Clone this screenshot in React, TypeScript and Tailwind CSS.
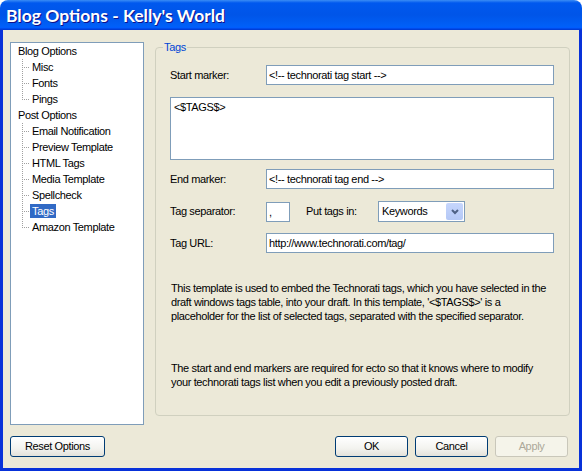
import React from 'react';

const tree = [
  { label: 'Blog Options', children: ['Misc', 'Fonts', 'Pings'] },
  {
    label: 'Post Options',
    children: [
      'Email Notification',
      'Preview Template',
      'HTML Tags',
      'Media Template',
      'Spellcheck',
      'Tags',
      'Amazon Template',
    ],
  },
];

const selected = 'Tags';

function Connector({ last }: { last: boolean }) {
  return (
    <svg width="8" height="16" className="shrink-0">
      <line x1="0.5" y1="0" x2="0.5" y2={last ? 9 : 16} stroke="#a0a0a0" strokeDasharray="1 1" />
      <line x1="2" y1="8.5" x2="8" y2="8.5" stroke="#a0a0a0" strokeDasharray="1 1" />
    </svg>
  );
}

function TreePanel() {
  return (
    <div className="w-[134px] h-[383px] mt-[1px] shrink-0 border border-[#7f9db9] bg-white">
      {tree.map((group) => (
        <div key={group.label}>
          <div className="h-4 flex items-center pl-[5px]">
            <span className="px-[2px] leading-[14px]">{group.label}</span>
          </div>
          {group.children.map((child, i) => (
            <div key={child} className="h-4 flex items-center pl-[11px]">
              <Connector last={i === group.children.length - 1} />
              <span
                className={
                  child === selected
                    ? 'px-[2px] leading-[14px] bg-[#316ac5] text-white'
                    : 'px-[2px] leading-[14px]'
                }
              >
                {child}
              </span>
            </div>
          ))}
        </div>
      ))}
    </div>
  );
}

function TextBox({ value, className }: { value: string; className: string }) {
  return (
    <input
      readOnly
      value={value}
      className={`h-[20px] border border-[#7f9db9] bg-white pl-[2px] outline-none ${className}`}
    />
  );
}

function Button({ label, disabled }: { label: string; disabled?: boolean }) {
  return (
    <button
      className={
        disabled
          ? 'w-[73px] h-[21px] rounded-[3px] border border-[#c9c7ba] bg-[#f5f4ea] text-[#aca899]'
          : 'w-[73px] h-[21px] rounded-[3px] border border-[#003c74] bg-[linear-gradient(180deg,#ffffff,#f3f3ef_60%,#e3e2da)] text-black'
      }
    >
      {label}
    </button>
  );
}

export default function App() {
  return (
    <div className="w-[582px] h-[471px] bg-white font-['Liberation_Sans',Arial,sans-serif] text-[11px] tracking-[-0.36px] text-black">
      <div className="flex flex-col h-full rounded-t-[8px] overflow-hidden">
        <div className="h-[30px] shrink-0 flex items-center pl-[6px] pt-[2px] bg-[linear-gradient(180deg,#3a8cf5,#0058ee_10%,#0055e8_50%,#0060f8_88%,#005bff_93%,#003dd7_97%,#003dd7)]">
          <span className="font-['Lato',sans-serif] font-bold text-[17.5px] tracking-normal text-white [text-shadow:1px_1px_#0f1089]">
            Blog Options - Kelly's World
          </span>
        </div>

        <div className="flex-1 flex flex-col bg-[#ece9d8] border-x-[3px] border-b-[3px] border-[#0831d9] pl-[7px] pr-[9px] pt-[11px]">
          <div className="flex gap-[11px]">
            <TreePanel />

            <fieldset className="w-[415px] h-[375px] border border-[#d0d0bf] rounded-[4px] pl-[14px] pr-[15px]">
              <legend className="-ml-[7px] px-[1px] leading-[13px] text-[#0046d5]">Tags</legend>

              <div className="flex items-center mt-[11px]">
                <span className="w-[96px] shrink-0">Start marker:</span>
                <TextBox value="<!-- technorati tag start -->" className="flex-1" />
              </div>

              <textarea
                readOnly
                value="<$TAGS$>"
                className="block w-full h-[63px] mt-[12px] border border-[#7f9db9] bg-white pl-[3px] pt-[3px] leading-[13px] resize-none outline-none"
              />

              <div className="flex items-center mt-[9px]">
                <span className="w-[96px] shrink-0">End marker:</span>
                <TextBox value="<!-- technorati tag end -->" className="flex-1" />
              </div>

              <div className="flex items-center mt-[12px] h-[21px]">
                <span className="w-[96px] shrink-0">Tag separator:</span>
                <TextBox value="," className="w-[24px]" />
                <span className="ml-[16px] w-[72px] shrink-0">Put tags in:</span>
                <div className="w-[87px] h-[21px] flex items-center border border-[#7f9db9] bg-white">
                  <span className="flex-1 pl-[3px]">Keywords</span>
                  <div className="w-[17px] h-[17px] mr-[1px] rounded-[2px] bg-[linear-gradient(180deg,#c6d6fc,#b4c8f6)] flex items-center justify-center">
                    <svg width="8" height="6" viewBox="0 0 8 6">
                      <path d="M1 1 L4 4 L7 1" fill="none" stroke="#4d6185" strokeWidth="2" />
                    </svg>
                  </div>
                </div>
              </div>

              <div className="flex items-center mt-[11px]">
                <span className="w-[96px] shrink-0">Tag URL:</span>
                <TextBox value="http://www.technorati.com/tag/" className="flex-1" />
              </div>

              <p className="mt-[28px] leading-[14px] pl-[1px]">
                This template is used to embed the Technorati tags, which you have selected in the draft
                windows tags table, into your draft. In this template, '&lt;$TAGS$&gt;' is a placeholder for the
                list of selected tags, separated with the specified separator.
              </p>

              <p className="mt-[38px] leading-[14px] pl-[1px]">
                The start and end markers are required for ecto so that it knows where to modify your
                technorati tags list when you edit a previously posted draft.
              </p>
            </fieldset>
          </div>

          <div className="flex items-center mt-[11px] pr-[2px]">
            <button className="w-[95px] h-[21px] rounded-[3px] border border-[#003c74] bg-[linear-gradient(180deg,#ffffff,#f3f3ef_60%,#e3e2da)]">
              Reset Options
            </button>
            <div className="ml-auto flex gap-[7px]">
              <Button label="OK" />
              <Button label="Cancel" />
              <Button label="Apply" disabled />
            </div>
          </div>
        </div>
      </div>
    </div>
  );
}
